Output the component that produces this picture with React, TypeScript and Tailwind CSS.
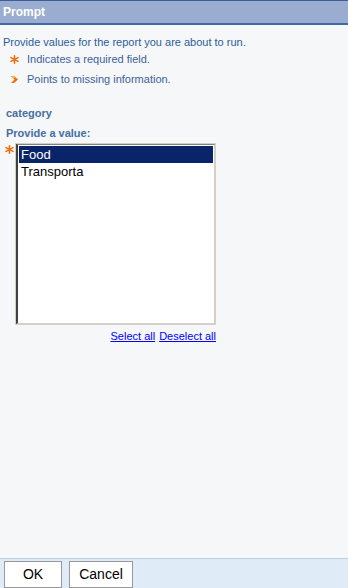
import { useState } from 'react';

const items = ['Food', 'Transporta'];

const Asterisk = () => (
  <svg width="9" height="9" viewBox="0 0 9 9" className="shrink-0">
    <g stroke="#f26a10" strokeWidth="1.6" strokeLinecap="round">
      <line x1="4.5" y1="0.8" x2="4.5" y2="8.2" />
      <line x1="1" y1="2.6" x2="8" y2="6.4" />
      <line x1="1" y1="6.4" x2="8" y2="2.6" />
    </g>
  </svg>
);

const Arrow = () => (
  <svg width="9" height="9" viewBox="0 0 9 9" className="shrink-0">
    <path d="M1 1 L4 1 L8 4.5 L4 8 L1 8 L4.5 4.5 Z" fill="#f26a10" />
    <path d="M1 1 L4 1 L6 3 L3 3 Z" fill="#f7b23a" />
  </svg>
);

const App = () => {
  const [selected, setSelected] = useState<string[]>(['Food']);

  return (
    <div className="w-[348px] h-[588px] flex flex-col bg-[#f5f7f9] font-['Liberation_Sans',Arial,sans-serif] text-[11px] overflow-hidden">
      {/* header */}
      <div className="h-[25px] border-t border-t-[#3b5f95] border-b-2 border-b-[#3f6aa6] bg-[#9aaccf] flex items-center px-[3px]">
        <span className="text-white font-bold text-[12px] leading-none">Prompt</span>
      </div>

      <div className="flex-1 flex flex-col px-[3px]">
        <p className="mt-[11px] text-[#2c5d98] leading-[13px]">Provide values for the report you are about to run.</p>
        <div className="flex items-center gap-[8px] pl-[7px] mt-[4px] text-[#3f5f99] leading-[13px]">
          <Asterisk />
          <span>Indicates a required field.</span>
        </div>
        <div className="flex items-center gap-[8px] pl-[7px] mt-[7px] text-[#3f5f99] leading-[13px]">
          <Arrow />
          <span>Points to missing information.</span>
        </div>

        <div className="pl-[3px] mt-[21px] font-bold text-[#466f9f] leading-[13px]">category</div>
        <div className="pl-[3px] mt-[7px] font-bold text-[#466f9f] leading-[13px]">Provide a value:</div>

        <div className="flex items-start mt-[3px]">
          <div className="w-[12px] pt-[2px] flex justify-center">
            <Asterisk />
          </div>
          <div className="w-[201px] h-[182px] border border-[#d4d0c8] bg-white">
            <div className="h-full border-l-2 border-t border-l-[#404040] border-t-[#808080] border-r border-b border-r-[#d4d0c8] border-b-[#d4d0c8] pt-[1px] pl-[1px] pr-[1px]">
              {items.map((it) => {
                const on = selected.includes(it);
                return (
                  <div
                    key={it}
                    onClick={() => setSelected([it])}
                    className={`h-[17px] px-[2px] leading-[17px] text-[13px] cursor-default ${
                      on ? 'bg-[#0a246a] text-white' : 'text-black'
                    }`}
                  >
                    {it}
                  </div>
                );
              })}
            </div>
          </div>
        </div>

        <div className="w-[213px] flex justify-end gap-[4px] mt-[5px] leading-[13px]">
          <a href="#" onClick={(e) => { e.preventDefault(); setSelected([...items]); }} className="text-[#0000ff] underline">Select all</a>
          <a href="#" onClick={(e) => { e.preventDefault(); setSelected([]); }} className="text-[#0000ff] underline">Deselect all</a>
        </div>
      </div>

      {/* footer */}
      <div className="h-[30px] border-t border-t-[#b9cfe6] bg-[#dfebf7] flex items-end gap-[7px] px-[4px]">
        <button className="w-[58px] h-[27px] bg-white border border-[#999999] text-[14px] text-black">OK</button>
        <button className="w-[64px] h-[27px] bg-white border border-[#999999] text-[14px] text-black">Cancel</button>
      </div>
    </div>
  );
};

export default App;
